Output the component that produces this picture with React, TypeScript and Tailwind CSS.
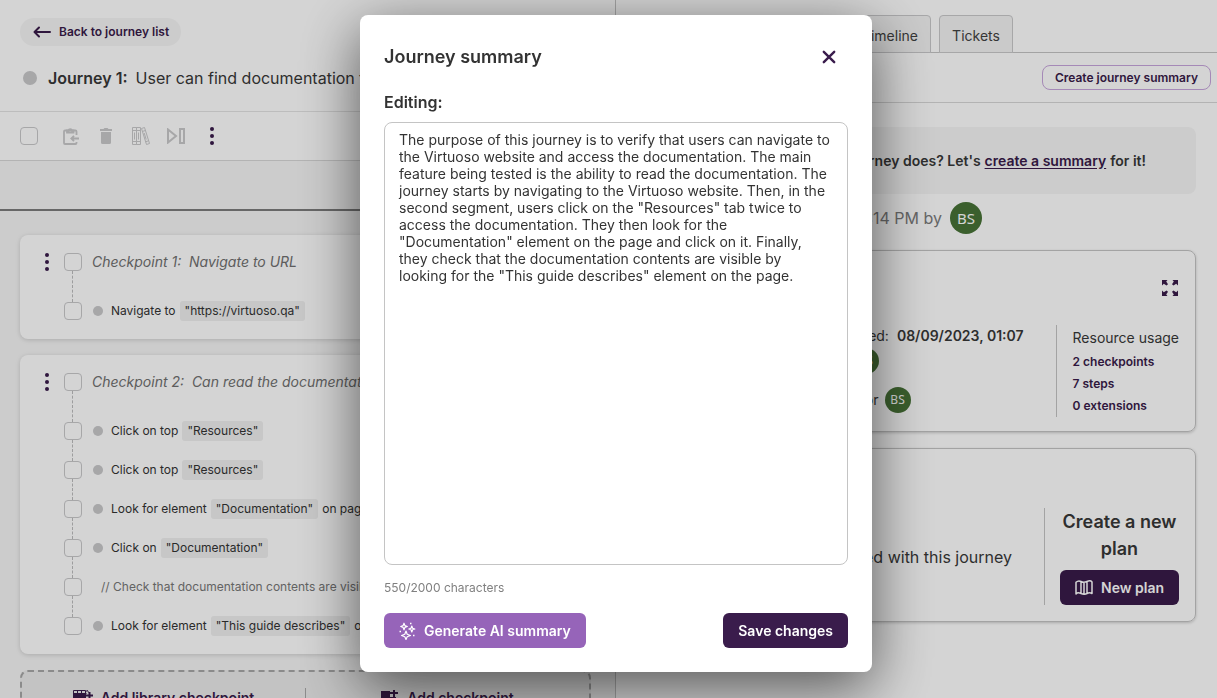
import { Fragment, ReactNode, useState } from 'react';
import clsx from 'clsx';

interface Step {
  text: string;
  value?: string;
  after?: string;
  comment?: boolean;
}

interface CheckpointProps {
  title: string;
  steps: Step[];
}

const SUMMARY =
  'The purpose of this journey is to verify that users can navigate to the Virtuoso website and access the documentation. The main feature being tested is the ability to read the documentation. The journey starts by navigating to the Virtuoso website. Then, in the second segment, users click on the "Resources" tab twice to access the documentation. They then look for the "Documentation" element on the page and click on it. Finally, they check that the documentation contents are visible by looking for the "This guide describes" element on the page.';

const firstSteps: Step[] = [{ text: 'Navigate to', value: '"https://virtuoso.qa"' }];

const secondSteps: Step[] = [
  { text: 'Click on top', value: '"Resources"' },
  { text: 'Click on top', value: '"Resources"' },
  { text: 'Look for element', value: '"Documentation"', after: 'on page' },
  { text: 'Click on', value: '"Documentation"' },
  { text: '// Check that documentation contents are visible', comment: true },
  { text: 'Look for element', value: '"This guide describes"', after: 'on page' },
];

const Checkbox = ({ label }: { label: string }) => (
  <input
    type="checkbox"
    aria-label={label}
    className="size-[18px] shrink-0 appearance-none rounded border border-[#c9c9cb] checked:bg-[#391b4a]"
  />
);

const MoreButton = ({ className }: { className?: string }) => (
  <button type="button" aria-label="More actions" className={clsx('shrink-0 text-[#391b4a]', className)}>
    <svg width="4" height="18" viewBox="0 0 4 18" fill="currentColor">
      <circle cx="2" cy="2" r="2" />
      <circle cx="2" cy="9" r="2" />
      <circle cx="2" cy="16" r="2" />
    </svg>
  </button>
);

const Avatar = ({ className }: { className: string }) => (
  <span className={clsx('flex shrink-0 items-center justify-center rounded-full bg-[#487337] font-["Noto_Sans",sans-serif] text-white', className)}>
    BS
  </span>
);

const Checkpoint = ({ title, steps }: CheckpointProps) => (
  <section className="rounded-lg bg-white pt-[18px] pb-[19px] pl-[25px] shadow-[0_1px_5px_rgba(0,0,0,0.16)]">
    <div className="flex h-[18px] items-center">
      <MoreButton />
      <div className="ml-[15px] flex items-center gap-[10px]">
        <Checkbox label={title} />
        <h2 className="text-sm whitespace-pre text-[#707070] italic">{title}</h2>
      </div>
    </div>
    {steps.map((step, index) => (
      <Fragment key={index}>
        <div
          className={clsx('ml-[27px] border-l border-dashed border-[#bdbdbf]', index === 0 ? 'h-[31px]' : 'h-[21px]')}
        />
        <div className="ml-[19px] flex h-[18px] items-center text-[12px] whitespace-nowrap text-[#333]">
          <Checkbox label={step.text} />
          {step.comment ? (
            <span className="ml-[19px] text-[#777]">{step.text}</span>
          ) : (
            <>
              <span className="mr-2 ml-[11px] size-[10px] rounded-full bg-[#c9c9cb]" />
              <span>{step.text}</span>
              <code className="mx-1 rounded-[3px] bg-[#f0f0f0] px-[5px] font-[Inter,sans-serif] leading-5">{step.value}</code>
              <span>{step.after}</span>
            </>
          )}
        </div>
      </Fragment>
    ))}
  </section>
);

const ToolbarButton = ({ label, children }: { label: string; children: ReactNode }) => (
  <button type="button" aria-label={label} className="flex w-5 justify-center text-[#c9c9cb]">
    {children}
  </button>
);

const Toolbar = () => (
  <div className="flex h-[49px] items-center border-b border-[#d8d8d8] pl-5">
    <Checkbox label="Select all" />
    <div className="ml-[23px] flex items-center gap-[15px]">
      <ToolbarButton label="Paste">
        <svg width="16" height="18" viewBox="0 0 16 18" fill="none" stroke="currentColor" strokeWidth="1.800">
          <path d="M13.5 8V4.5a1 1 0 0 0-1-1H2a1 1 0 0 0-1 1V16a1 1 0 0 0 1 1h10.500a1 1 0 0 0 1-1v-1" />
          <path d="M4 3.500V5.500h6.500V3.500H9a1.800 1.800 0 0 0-3.500 0z" />
          <path d="M16 11.500H8.500M11 8.800l-2.700 2.700 2.700 2.700" />
        </svg>
      </ToolbarButton>
      <ToolbarButton label="Delete">
        <svg width="12" height="16" viewBox="0 0 12 16" fill="currentColor">
          <path d="M0 1h3.500l1-1h3l1 1H12v2H0zM1 4h10v10.500a1.500 1.500 0 0 1-1.500 1.500h-7A1.500 1.500 0 0 1 1 14.500z" />
        </svg>
      </ToolbarButton>
      <ToolbarButton label="Add to library">
        <svg width="18" height="18" viewBox="0 0 18 18" fill="none" stroke="currentColor">
          <path d="M.5.5h4v17h-4zM4.500.5h4v17h-4zM.5 3.500h8M.5 14.500h8M2.500 5.500v7M6.500 5.500v7M9.500 1.500l3-1 5 16-3 1zM10.300 4.500l3-1M13.500 14.800l3-1M12.200 6l2 6.500" />
        </svg>
      </ToolbarButton>
      <ToolbarButton label="Run to step">
        <svg width="20" height="16" viewBox="0 0 20 16" fill="none" stroke="currentColor" strokeWidth="2">
          <path d="M2 1.500v13L10 8zM14 1h4v14h-4z" />
        </svg>
      </ToolbarButton>
    </div>
    <MoreButton className="ml-6" />
  </div>
);

const AddIcon = () => (
  <svg width="18" height="16" viewBox="0 0 18 16" fill="currentColor">
    <path d="M0 1h9v6h6v8H8l-4-3-4 3zM12 0h2v2h3v2h-3v3h-2V4h-3V2h3z" />
  </svg>
);

const LibraryIcon = () => (
  <svg width="20" height="16" viewBox="0 0 20 16" fill="none" stroke="currentColor">
    <path d="M.5.500h12v15H.5zM4.500.5v15M8.500.5v15M.5 3.500h13M12.500 1.500l2-1 1 2" />
    <path d="M2.500 4v11M6.500 4v11M10.500 4v11" strokeWidth="3" />
    <path d="M16.500 2v7M13 5.500h7" strokeWidth="2" />
  </svg>
);

const JourneyPane = () => (
  <div className="border-r border-[#c4c4c4] bg-[#f6f6f6]">
    <header className="bg-white">
      <div className="border-b border-[#e4e4e4] pt-[18px] pl-5">
        <a
          href="#journeys"
          className="inline-flex h-7 items-center gap-2 rounded-full bg-[#f6f6f6] pr-3 pl-[13px] text-[12px] font-semibold text-[#391b4a]"
        >
          <svg width="18" height="12" viewBox="0 0 18 12" fill="none" stroke="currentColor" strokeWidth="2" strokeLinecap="round" strokeLinejoin="round">
            <path d="M17 6H2M6 1.500 1.500 6 6 10.500" />
          </svg>
          Back to journey list
        </a>
        <div className="mt-4 flex h-[49px] items-start gap-[11px] pl-[3px] whitespace-nowrap text-[#383838]">
          <span className="mt-[9px] size-[14px] shrink-0 rounded-full bg-[#c9c9cb]" />
          <h1 className="flex gap-2 text-base leading-8">
            <span className="font-semibold">Journey 1:</span>
            <span>User can find documentation through</span>
          </h1>
        </div>
      </div>
      <Toolbar />
    </header>
    <div className="h-[50px] border-b-2 border-[#7c7c7c]" />
    <main className="flex flex-col gap-4 px-5 pt-6 pr-6">
      <Checkpoint title="Checkpoint 1:  Navigate to URL" steps={firstSteps} />
      <Checkpoint title="Checkpoint 2:  Can read the documentation" steps={secondSteps} />
      <div className="flex items-center rounded-lg border-2 border-dashed border-[#a8a8a8] bg-[#ebebeb] py-4 text-sm font-semibold text-[#391b4a]">
        <button type="button" className="flex flex-1 items-center justify-center gap-2">
          <LibraryIcon />
          Add library checkpoint
        </button>
        <div className="h-5 w-px bg-[#a8a8a8]" />
        <button type="button" className="flex flex-1 items-center justify-center gap-2">
          <AddIcon />
          Add checkpoint
        </button>
      </div>
    </main>
  </div>
);

const tabClass = 'h-[38px] rounded-t border border-[#c9c9cb] bg-[#f3f3f3] px-3 pt-1 text-sm text-[#424242]';

const DetailPane = () => (
  <div className="bg-white whitespace-nowrap text-[#383838]">
    <nav className="flex items-end gap-2 border-b border-[#c4c4c4] pt-[15px] pl-[222px]">
      <button type="button" className={clsx(tabClass, '-mb-px w-[93px] text-right')}>Timeline</button>
      <button type="button" className={clsx(tabClass, '-mb-px w-[74px]')}>Tickets</button>
    </nav>
    <div className="flex h-[50px] items-center justify-end border-b border-[#d8d8d8] pr-[6px]">
      <button type="button" className="h-[25px] rounded-lg border border-[#c7a5dc] px-3 text-[12px] font-semibold text-[#391b4a]">
        Create journey summary
      </button>
    </div>
    <div className="flex flex-col gap-4 pt-6 pr-[21px] pl-5">
      <div>
        <p className="flex h-[67px] items-center justify-end gap-1 rounded-lg bg-[#f6f6f6] pr-[50px] text-sm font-semibold">
          Not sure what this journey does? Let's
          <a href="#summary" className="text-[#391b4a] underline underline-offset-2">create a summary</a>
          for it!
        </p>
        <div className="mt-2 flex items-center justify-end gap-2 pr-[214px] text-base text-[#7b7b7b]">
          Last executed at 2:14 PM by
          <Avatar className="size-8 text-[15px]" />
        </div>
      </div>
      <section className="rounded-lg border border-[#c4c4c4] px-4 pb-[14px] shadow-[0_1px_3px_rgba(0,0,0,0.2)]">
        <div className="flex h-[74px] items-center justify-end pr-px">
          <button type="button" aria-label="Expand" className="text-[#391b4a]">
            <svg width="16" height="16" viewBox="0 0 16 16" fill="currentColor">
              <path d="M0 0h5.500L4.200 1.500 6 4.200 4.500 5.500 1.800 3.800 0 5.500zM16 0v5.500l-1.800-1.700-2.700 1.700L10 4.200l1.800-2.700L10.500 0zM0 16v-5.500l1.800 1.700 2.700-1.700L6 11.800l-1.800 2.700L5.500 16zM16 16h-5.500l1.300-1.500L10 11.800l1.500-1.300 2.700 1.700 1.800-1.700z" />
            </svg>
          </button>
        </div>
        <div className="flex justify-end">
          <div className="mr-8 text-sm">
            <p className="flex h-[22px] items-center gap-2">
              Created: <span className="font-semibold">08/09/2023, 01:07</span>
            </p>
            <p className="flex h-7 items-center justify-end gap-1 pr-[145px]">
              by <Avatar className="size-[26px] text-[12px]" />
            </p>
            <p className="mt-3 flex h-[26px] items-center justify-end gap-[6px] pr-[113px]">
              Author <Avatar className="size-[26px] text-[12px]" />
            </p>
          </div>
          <div className="border-l border-[#c4c4c4] pl-4">
            <h3 className="h-[26px] text-sm leading-[26px]">Resource usage</h3>
            <ul className="text-[12px] leading-[22px] font-semibold text-[#391b4a]">
              <li>2 checkpoints</li>
              <li>7 steps</li>
              <li>0 extensions</li>
            </ul>
          </div>
        </div>
      </section>
      <section className="flex justify-end rounded-lg border border-[#c4c4c4] px-4 pt-[59px] pb-4 shadow-[0_1px_3px_rgba(0,0,0,0.2)]">
        <p className="mr-8 self-center text-base">No plans associated with this journey</p>
        <div className="flex flex-col gap-2 border-l border-[#c4c4c4] pl-[15px]">
          <h3 className="text-center text-lg leading-[27px] font-semibold">
            Create a new
            <br />
            plan
          </h3>
          <button type="button" className="flex h-[35px] w-[119px] items-center justify-center gap-2 rounded-md bg-[#391b4a] text-sm font-semibold text-white">
            <svg width="18" height="15" viewBox="0 0 18 15" fill="none" stroke="currentColor" strokeWidth="1.500" strokeLinejoin="round">
              <path d="M1 2.200Q3.500 0 6 1.500T12 1.500 17 2V13.500Q14.500 12 12 13.500T6 13.500 1 14zM6 1.500v12M9 2.500v11M12 1.500v12" />
            </svg>
            New plan
          </button>
        </div>
      </section>
    </div>
  </div>
);

const SummaryModal = () => {
  const [summary, setSummary] = useState(SUMMARY);

  return (
    <div className="fixed inset-0 flex items-start justify-center bg-black/17 pt-[15px] pl-[15px]">
      <div
        role="dialog"
        aria-labelledby="summary-title"
        className="w-[512px] rounded-lg bg-white p-6 text-[#333] shadow-[0_16px_60px_rgba(0,0,0,0.6)]"
      >
        <div className="flex h-[35px] items-center justify-between pr-3">
          <h2 id="summary-title" className="text-lg font-semibold">Journey summary</h2>
          <button type="button" aria-label="Close" className="text-[#3a1c4c]">
            <svg width="14" height="14" viewBox="0 0 14 14" fill="none" stroke="currentColor" strokeWidth="2.400" strokeLinecap="round">
              <path d="m1.800 1.800 10.400 10.400M12.200 1.800 1.800 12.200" />
            </svg>
          </button>
        </div>
        <label htmlFor="summary" className="mt-4 block text-base font-semibold">Editing:</label>
        <textarea
          id="summary"
          className="mt-2 block h-[443px] w-full resize-none rounded-lg border border-[#c4c4c4] px-[14px] py-2 text-sm leading-[17px] text-[#333] focus:outline-none"
          value={summary}
          onChange={(event) => setSummary(event.target.value)}
        />
        <p className="mt-[14px] text-[12px] leading-[18px] text-[#808080]">550/2000 characters</p>
        <div className="mt-4 flex justify-between text-sm font-semibold text-white">
          <button type="button" className="flex h-[35px] items-center gap-2 rounded-md bg-[#9664b9] pr-[15px] pl-[15px]">
            <svg width="17" height="18" viewBox="0 0 17 18" fill="none" stroke="currentColor" strokeWidth="1.200" strokeLinejoin="round">
              <path d="M5 1.200 5.900 3.600 8.300 4.500 5.900 5.400 5 7.800 4.100 5.400 1.700 4.500 4.100 3.600zM12.800 4l.8 2.200 2.200.8-2.200.8-.8 2.200-.8-2.200-2.200-.8 2.200-.8zM7 9l1.200 3.300 3.300 1.200-3.300 1.200L7 17.500l-1.200-2.800-3.300-1.200 3.300-1.200z" />
              <path d="M11 1.500h1.500M.5 9.500H2M14 13.500h1.500" strokeWidth="1.500" />
            </svg>
            Generate AI summary
          </button>
          <button type="button" className="h-[35px] rounded-md bg-[#3a1c4c] px-[15px]">Save changes</button>
        </div>
      </div>
    </div>
  );
};

export default function App() {
  return (
    <div className="grid h-screen grid-cols-[616fr_601fr] overflow-hidden font-[Inter,sans-serif]">
      <JourneyPane />
      <DetailPane />
      <SummaryModal />
    </div>
  );
}
